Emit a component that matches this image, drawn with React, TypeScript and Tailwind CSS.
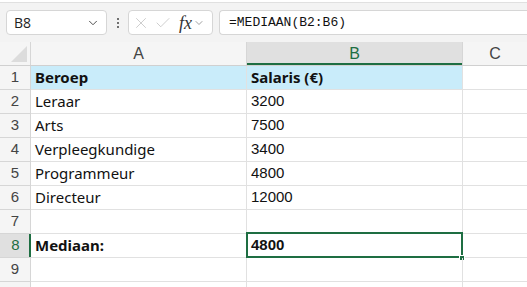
import { ChevronDown, X, Check } from "lucide-react"

const rows: { a: string; b: string; bold?: boolean; fill?: boolean }[] = [
  { a: "Beroep", b: "Salaris (€)", bold: true, fill: true },
  { a: "Leraar", b: "3200" },
  { a: "Arts", b: "7500" },
  { a: "Verpleegkundige", b: "3400" },
  { a: "Programmeur", b: "4800" },
  { a: "Directeur", b: "12000" },
  { a: "", b: "" },
  { a: "Mediaan:", b: "4800", bold: true },
  { a: "", b: "" },
  { a: "", b: "" },
]

export default function App() {
  return (
    <div className="w-[527px] h-[287px] overflow-hidden bg-white font-['Noto_Sans',sans-serif] text-[#111]">
      {/* formula bar */}
      <div className="h-[2px] bg-white" />
      <div className="h-[40px] bg-[#f3f3f3] border-t border-[#e0e0e0] flex items-start pt-[7px] pl-[6px] gap-0">
        <div className="w-[101px] h-[25px] bg-white border border-[#d6d6d6] rounded-[4px] flex items-center pl-[7px] pr-[6px] justify-between">
          <span className="text-[14px] text-[#222] font-['Open_Sans',sans-serif]">B8</span>
          <ChevronDown className="w-[14px] h-[14px] text-[#444]" strokeWidth={1.6} />
        </div>
        <div className="w-[21px] h-[25px] flex flex-col items-center justify-center gap-[2px]">
          <span className="w-[2px] h-[2px] bg-[#444] rounded-full" />
          <span className="w-[2px] h-[2px] bg-[#444] rounded-full" />
          <span className="w-[2px] h-[2px] bg-[#444] rounded-full" />
        </div>
        <div className="w-[85px] h-[25px] bg-white border border-[#d6d6d6] rounded-[4px] flex items-center pl-[3px]">
          <X className="w-[18px] h-[18px] text-[#c4c4c4]" strokeWidth={1.1} />
          <Check className="w-[18px] h-[18px] text-[#c4c4c4] ml-[4px]" strokeWidth={1.1} />
          <span className="ml-[7px] text-[18px] italic font-['Liberation_Serif',serif] text-[#333] leading-none">
            fx
          </span>
          <ChevronDown className="w-[12px] h-[12px] text-[#888] ml-[1px]" strokeWidth={1.6} />
        </div>
        <div className="ml-[6px] flex-1 h-[25px] bg-white border border-r-0 border-[#d6d6d6] rounded-l-[4px] flex items-center pl-[9px]">
          <span className="text-[13px] font-['Liberation_Mono',monospace] text-[#111]">=MEDIAAN(B2:B6)</span>
        </div>
      </div>

      {/* column headers */}
      <div className="flex h-[24px] bg-[#f5f5f5] border-b border-[#d0d0d0]">
        <div className="w-[31px] border-r border-[#d6d6d6] relative">
          <div className="absolute right-[3px] bottom-[3px] w-0 h-0 border-l-[16px] border-l-transparent border-b-[16px] border-b-[#dcdcdc]" />
        </div>
        <div className="w-[216px] border-r border-[#d6d6d6] flex items-center justify-center text-[16px] text-[#444] font-['Liberation_Sans',sans-serif]">
          A
        </div>
        <div className="w-[216px] bg-[#e0e0e0] border-r border-[#d6d6d6] flex items-center justify-center text-[16px] text-[#1e6e42] font-['Liberation_Sans',sans-serif] shadow-[inset_0_-2px_0_#1e6e42]">
          B
        </div>
        <div className="flex-1 flex items-center justify-center text-[16px] text-[#444] font-['Liberation_Sans',sans-serif]">
          C
        </div>
      </div>

      {/* rows */}
      {rows.map((r, i) => {
        const sel = i === 7
        return (
          <div key={i} className="flex h-[24px]">
            <div
              className={
                sel
                  ? "w-[31px] bg-[#e0e0e0] border-b border-[#d6d6d6] shadow-[inset_-2px_0_0_#1e6e42] flex items-center justify-center text-[15px] text-[#1e6e42] font-['Liberation_Sans',sans-serif]"
                  : "w-[31px] bg-[#f5f5f5] border-r border-b border-[#d6d6d6] flex items-center justify-center text-[15px] text-[#444] font-['Liberation_Sans',sans-serif]"
              }
            >
              {i < 9 ? i + 1 : ""}
            </div>
            <div
              className={
                (r.fill ? "bg-[#c9ecfa] " : "") +
                (r.bold ? "font-bold " : "") +
                "w-[216px] border-r border-b border-[#e1e1e1] flex items-center pl-[4px] text-[15px]"
              }
            >
              {r.a}
            </div>
            <div
              className={
                (r.fill ? "bg-[#c9ecfa] font-['Noto_Sans',sans-serif] " : "font-['Liberation_Sans',sans-serif] ") +
                (r.bold ? "font-bold " : "") +
                "w-[216px] border-r border-b border-[#e1e1e1] flex items-center pl-[4px] text-[15px] relative"
              }
            >
              {r.b}
              {sel && (
                <>
                  <div className="absolute -top-[2px] -left-[1px] -right-[1px] -bottom-[1px] border-2 border-[#1e6e42]" />
                  <div className="absolute -right-[3px] -bottom-[4px] w-[6px] h-[6px] bg-[#1e6e42] border border-white" />
                </>
              )}
            </div>
            <div className="flex-1 border-b border-[#e1e1e1]" />
          </div>
        )
      })}
    </div>
  )
}
